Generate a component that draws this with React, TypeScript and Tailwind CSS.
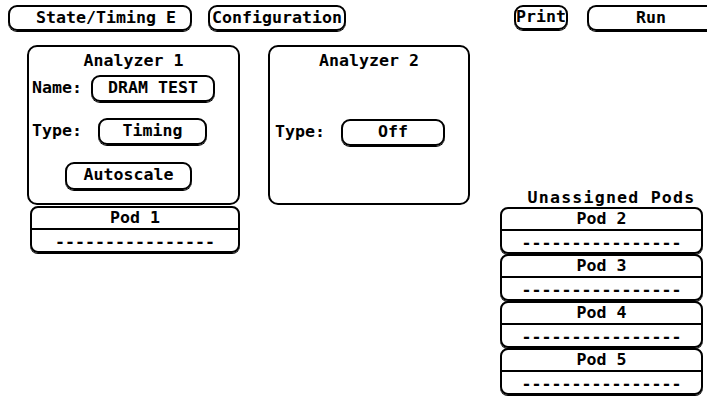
import React from "react";

const dashes = "----------------";

const Btn = ({ label, className }: { label: string; className: string }) => (
  <div
    className={`shrink-0 flex items-center justify-center border-2 border-black rounded-[9px] shadow-[0_1px_0_#000] ${className}`}
  >
    {label}
  </div>
);

const Pod = ({ name, className }: { name: string; className: string }) => (
  <div className={`shrink-0 border-2 border-black rounded-[8px] shadow-[0_1px_0_#000] ${className}`}>
    <div className="h-[22px] border-b-2 border-black flex items-center justify-center leading-none">
      {name}
    </div>
    <div className="h-[21px] flex items-center justify-center leading-none pt-[3px]">
      {dashes}
    </div>
  </div>
);

export default function App() {
  return (
    <div className="w-[707px] h-[398px] bg-white overflow-hidden text-black font-['DejaVu_Sans_Mono',monospace] font-bold text-[16.6px]">
      {/* top softkeys */}
      <div className="flex pt-[5px] h-[45px] w-[707px] overflow-hidden">
        <Btn label="State/Timing E" className="ml-[8px] w-[184px] h-[26px] pl-[12px]" />
        <Btn label="Configuration" className="ml-[16px] w-[138px] h-[26px]" />
        <Btn label="Print" className="ml-[168px] w-[54px] h-[25px]" />
        <div className="shrink-0 ml-[19px] w-[220px] h-[26px] flex items-center pl-[47px] border-2 border-r-0 border-black rounded-l-[9px] shadow-[0_1px_0_#000]">
          Run
        </div>
      </div>

      <div className="flex">
        {/* analyzer 1 + pod 1 */}
        <div className="ml-[27px] w-[213px] shrink-0">
          <div className="h-[160px] border-2 border-black rounded-[10px] flex flex-col">
            <div className="text-center leading-none mt-[6px]">Analyzer 1</div>
            <div className="flex items-center mt-[5px]">
              <span className="ml-[3px]">Name:</span>
              <Btn label="DRAM TEST" className="ml-[9px] w-[124px] h-[27px]" />
            </div>
            <div className="flex items-center mt-[16px]">
              <span className="ml-[3px]">Type:</span>
              <Btn label="Timing" className="ml-[16px] w-[109px] h-[27px]" />
            </div>
            <div className="flex mt-[17px]">
              <Btn label="Autoscale" className="ml-[36px] w-[127px] h-[28px]" />
            </div>
          </div>
          <Pod name="Pod 1" className="ml-[3px] w-[210px] mt-[1px]" />
        </div>

        {/* analyzer 2 */}
        <div className="ml-[28px] w-[202px] h-[160px] shrink-0 border-2 border-black rounded-[10px] flex flex-col">
          <div className="text-center leading-none mt-[6px]">Analyzer 2</div>
          <div className="flex items-center mt-[49px]">
            <span className="ml-[5px]">Type:</span>
            <Btn label="Off" className="ml-[16px] w-[104px] h-[27px]" />
          </div>
        </div>

        {/* unassigned pods */}
        <div className="ml-[30px] w-[203px] shrink-0 pt-[145px] flex flex-col">
          <div className="text-center leading-none tracking-[1.2px] h-[17px] pl-[20px]">
            Unassigned Pods
          </div>
          <Pod name="Pod 2" className="w-[203px]" />
          <Pod name="Pod 3" className="w-[203px]" />
          <Pod name="Pod 4" className="w-[203px]" />
          <Pod name="Pod 5" className="w-[203px]" />
        </div>
      </div>
    </div>
  );
}
